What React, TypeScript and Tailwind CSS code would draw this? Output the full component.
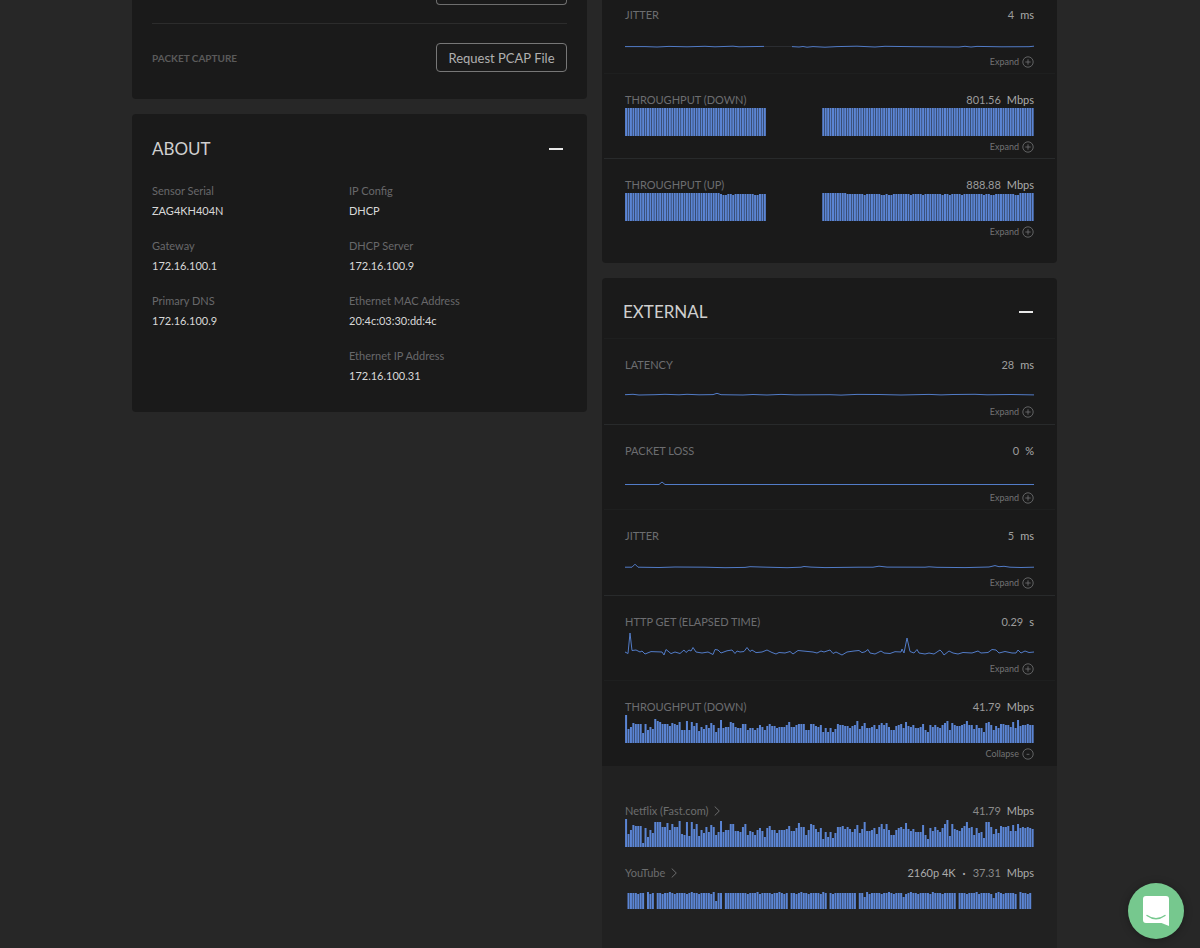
import React from "react";

const DOWN = [28,14,16,20,19,19,19,10,19,13,16,14,24,22,21,19,19,19,17,20,19,18,21,13,13,22,13,21,17,20,12,16,14,18,15,20,18,11,15,23,15,16,16,21,20,16,15,15,19,19,13,15,15,13,15,18,16,13,17,19,17,17,15,16,16,16,18,21,16,16,18,19,19,19,13,13,19,19,17,16,18,11,15,11,15,11,14,19,18,18,17,17,15,17,18,22,14,17,20,15,15,16,18,14,18,20,18,20,16,13,13,17,18,19,15,21,17,16,18,15,15,16,19,13,11,18,16,18,16,15,18,20,22,13,20,18,17,17,18,19,22,18,18,14,18,15,15,11,20,21,18,13,17,15,19,19,18,18,16,21,15,23,17,18,18,19,18,18];

const NETFLIX = [28,13,17,22,21,21,21,4,19,10,17,14,25,25,25,20,20,24,17,23,20,20,26,13,12,25,11,25,18,23,11,17,14,20,15,22,20,12,15,26,15,17,17,23,23,16,16,15,20,23,12,16,15,12,17,19,16,10,19,21,17,17,14,17,17,17,18,21,16,16,19,24,20,20,12,17,23,22,18,15,19,8,15,10,15,9,14,20,20,21,18,20,18,15,18,22,14,18,25,16,16,17,19,13,20,23,18,23,17,12,12,17,19,20,18,24,18,16,18,15,15,15,22,12,8,19,16,20,17,15,19,23,27,11,23,18,17,16,19,21,25,19,20,12,19,14,15,9,25,25,20,13,18,14,21,20,20,21,16,22,16,23,19,20,19,20,19,18];

const YT_GAPS = [0, 8, 12, 40, 67, 83, 95, 136, 161, 167];
const YT_DIPS: Record<number, number> = { 37: 8, 98: 12, 114: 12, 151: 11 };
const YOUTUBE = Array.from({ length: 168 }, (_, i) =>
  YT_GAPS.includes(i) ? 0 : (YT_DIPS[i] ?? 16 + ((i * 7) % 5 === 0 ? -1 : 0) + ((i * 5) % 9 === 0 ? 1 : 0)),
);

const offline = (i: number) => i > 57 && i < 81;
const LAN_DOWN = Array.from({ length: 168 }, (_, i) => (offline(i) ? 0 : 28));
const LAN_DIPS = [40, 41, 44, 53, 54, 98, 105, 106, 108, 109, 117, 122, 130, 133, 138, 147, 150, 151, 160, 161];
const LAN_UP = Array.from({ length: 168 }, (_, i) => (offline(i) ? 0 : LAN_DIPS.includes(i) ? 26 : i > 38 && i < 58 ? 27 : i > 90 && i < 162 ? 27 : 28));

const LAN_JITTER = ["0,23.6 20,23.6 32,24 44,23.4 62,23.8 80,23.3 90,23.8 108,23.2 114,23.8 139,23.4", "167,23.6 174,24 178,23.5 182,24.2 188,23.6 200,24.2 212,23.6 232,23.2 250,24 260,23.3 290,23.7 318,23.9 334,24 340,23.3 346,24 352,23.4 376,23.8 404,23.7 409,23.2"];
const LATENCY = ["0,21.7 8,21.3 14,22 30,21.7 40,21.3 54,21.8 62,21.3 74,21.8 88,21.6 92,20.3 96,21.7 118,22 128,21.5 142,22 156,21.4 170,21.9 205,21.7 216,22.1 232,21.4 254,21.5 276,22 304,21.4 316,21.9 328,21.5 350,21.3 362,21.8 386,21.5 409,21.9"];
const LOSS = ["0,25.5 34,25.5 37,23 40,25.5 409,25.5"];
const JITTER = ["0,23.2 7,23.2 10,20.2 13,23.2 34,23.5 50,23 80,23.2 100,23.7 120,23.4 125,22.7 142,23.2 162,23.7 176,23.2 179,22.5 186,23.1 200,23.6 234,23.2 248,23.2 254,22.2 262,23.1 300,23.2 304,22.8 312,23.3 340,23.6 364,23 370,21.6 374,22.7 379,22.3 385,23.2 396,23.5 409,23.2"];
const HTTP = ["0,22 3,23.5 5,3 7,20.5 11,20 15,22 17,21 20,24 26,21.6 37,22 39,25 41,19.5 46,23.6 50,22 55,23.5 59,20 61,22.5 64,20 66,21 68,17.5 71,22 77,23 83,22 88,24.5 90,19.5 93,20 96,23 102,20.8 107,20 110,23.5 112,21 115,22 119,21.5 122,17.5 125,21.5 127,20 131,22.6 137,22 142,20 147,22.5 151,24 154,22.5 160,23 165,21.5 168,24 173,20.5 188,22 192,23 196,21 199,22 202,21 205,20 208,23.5 211,22 217,25 222,22 229,21 234,20.5 237,22.6 240,21.8 243,19.5 245,23 250,24 256,21 259,23 265,23.5 270,21.7 276,22 277,19 279,23 282,8 285,21.5 289,23 292,19.5 294,23 300,24 304,23 309,24 315,20 317,22 319,25 324,21 328,23 333,24 338,22.5 347,23 353,21 356,23 363,22.5 367,19.5 371,20 374,23 380,21.5 387,23 391,23 393,20 396,23 400,21 404,22.5 409,22"];

function Bars({ data, label }: { data: number[]; label: string }) {
  return (
    <svg role="img" aria-label={label} viewBox="0 0 168 28" preserveAspectRatio="none" className="block h-7 w-full fill-[#5b85d4]">
      {data.map((h, i) => (h ? <rect key={i} x={i + 0.03} y={28 - h} width={0.82} height={h} /> : null))}
    </svg>
  );
}

function Line({ lines, label }: { lines: string[]; label: string }) {
  return (
    <svg role="img" aria-label={label} viewBox="0 0 409 28" preserveAspectRatio="none" className="block h-7 w-full fill-none stroke-[#527cc8] stroke-1">
      {lines.length > 1 && <path d="M139 23.5H167" className="stroke-[#2b2d31]" />}
      {lines.map((points) => (
        <polyline key={points} points={points} strokeLinejoin="round" vectorEffect="non-scaling-stroke" />
      ))}
    </svg>
  );
}

function Toggle({ open = false }: { open?: boolean }) {
  return (
    <button type="button" aria-expanded={open} className="flex h-[22px] items-center gap-[3px] self-end text-[9px] leading-3 text-[#727374]">
      {open ? "Collapse" : "Expand"}
      <svg viewBox="0 0 12 12" className="size-3 fill-none stroke-[#747576]" strokeWidth="0.8" aria-hidden="true">
        <circle cx="6" cy="6" r="5.2" />
        {open ? <path d="M4.6 6.3H7.4" /> : <path d="M3.3 6H8.7M6 3.3V8.7" />}
      </svg>
    </button>
  );
}

function Reading({ label, value, unit, note, link }: { label: string; value: string; unit: string; note?: string; link?: boolean }) {
  return (
    <div className="flex h-4 items-center justify-between text-[11px] leading-4">
      {link ? (
        <a href="#" className="flex items-center gap-[6px] text-[#6c6d6e]">
          {label}
          <svg viewBox="0 0 6 10" className="h-[10px] w-[6px] fill-none stroke-[#6c6d6e]" aria-hidden="true">
            <path d="M0.7 0.5L5.3 5L0.7 9.5" />
          </svg>
        </a>
      ) : (
        <h3 className="text-[#6c6d70]">{label}</h3>
      )}
      <p className="flex gap-[6px] text-[#ababab]">
        {note && (
          <>
            <span>{note}</span>
            <span className="px-[1px] font-bold">·</span>
          </>
        )}
        <span className={link ? "text-[#8a8a8a]" : "text-[#9c9c9c]"}>{value}</span>
        <span>{unit}</span>
      </p>
    </div>
  );
}

type MetricProps = { label: string; value: string; unit: string; first?: boolean; bright?: boolean; open?: boolean; children: React.ReactNode };

function Metric({ label, value, unit, first, bright, open, children }: MetricProps) {
  const edge = first ? "pt-[7px]" : bright ? "border-t border-[#282a2b] pt-[18px]" : "border-t border-[#1e1f1f] pt-[18px]";
  return (
    <div className={`flex flex-col px-[21px] ${edge}`}>
      <Reading label={label} value={value} unit={unit} />
      {children}
      <Toggle open={open} />
    </div>
  );
}

function MinimizeButton({ label }: { label: string }) {
  return (
    <button type="button" aria-label={label} className="flex h-6 w-[14px] items-center">
      <span className="h-[2px] w-full bg-[#e8e8e8]" />
    </button>
  );
}

const ABOUT = [
  [["Sensor Serial", "ZAG4KH404N"], ["Gateway", "172.16.100.1"], ["Primary DNS", "172.16.100.9"]],
  [["IP Config", "DHCP"], ["DHCP Server", "172.16.100.9"], ["Ethernet MAC Address", "20:4c:03:30:dd:4c"], ["Ethernet IP Address", "172.16.100.31"]],
];

export default function App() {
  return (
    <div className="min-h-screen bg-[#272727] pr-[143px] pl-[132px] font-[Lato,sans-serif]">
      <main className="grid grid-cols-2 items-start gap-[15px]">
        <div className="flex flex-col gap-[15px]">
          <section className="rounded-b bg-[#1a1a1a] px-5 pb-[27px]">
            <div className="flex justify-end border-b border-[#2c2c2c] pb-[18px]">
              <div className="h-[5px] w-[131px] rounded-b border border-t-0 border-[#6e6e6e]" />
            </div>
            <div className="flex items-center justify-between pt-[19px]">
              <h3 className="text-[10px] leading-4 font-bold text-[#5a5a5a]">PACKET CAPTURE</h3>
              <button type="button" className="h-[29px] w-[131px] rounded border border-[#777] text-[13px] leading-5 text-[#b0b0b0]">
                Request PCAP File
              </button>
            </div>
          </section>

          <section className="rounded bg-[#1a1a1a] px-5 pt-[23px] pb-[26px]">
            <header className="flex items-center justify-between pr-1">
              <h2 className="text-[17px] leading-6 text-[#cfcfcf]">ABOUT</h2>
              <MinimizeButton label="Minimize about" />
            </header>
            <div className="mt-5 grid grid-cols-[197px_1fr]">
              {ABOUT.map((column) => (
                <dl key={column[0][0]} className="flex flex-col gap-[15px]">
                  {column.map(([term, detail]) => (
                    <div key={term} className="text-[11px] leading-5">
                      <dt className="text-[#68686a]">{term}</dt>
                      <dd className="text-[#d8d8d8]">{detail}</dd>
                    </div>
                  ))}
                </dl>
              ))}
            </div>
          </section>
        </div>

        <div className="flex flex-col gap-[15px]">
          <section className="rounded-b bg-[#1a1a1a] px-[2px] pb-5">
            <Metric label="JITTER" value="4" unit="ms" first>
              <Line lines={LAN_JITTER} label="Internal jitter" />
            </Metric>
            <Metric label="THROUGHPUT (DOWN)" value="801.56" unit="Mbps">
              <Bars data={LAN_DOWN} label="Internal download throughput" />
            </Metric>
            <Metric label="THROUGHPUT (UP)" value="888.88" unit="Mbps" bright>
              <Bars data={LAN_UP} label="Internal upload throughput" />
            </Metric>
          </section>

          <section className="rounded-t bg-[#1a1a1a]">
            <header className="flex items-center justify-between pt-[22px] pr-6 pb-[14px] pl-[21px]">
              <h2 className="text-[17px] leading-6 text-[#cfcfcf]">EXTERNAL</h2>
              <MinimizeButton label="Minimize external" />
            </header>
            <div className="grid min-h-[428px] auto-rows-fr px-[2px]">
              <Metric label="LATENCY" value="28" unit="ms">
                <Line lines={LATENCY} label="Latency" />
              </Metric>
              <Metric label="PACKET LOSS" value="0" unit="%" bright>
                <Line lines={LOSS} label="Packet loss" />
              </Metric>
              <Metric label="JITTER" value="5" unit="ms">
                <Line lines={JITTER} label="Jitter" />
              </Metric>
              <Metric label="HTTP GET (ELAPSED TIME)" value="0.29" unit="s" bright>
                <Line lines={HTTP} label="HTTP GET elapsed time" />
              </Metric>
              <Metric label="THROUGHPUT (DOWN)" value="41.79" unit="Mbps" open>
                <Bars data={DOWN} label="Download throughput" />
              </Metric>
            </div>
            <div className="flex flex-col gap-[18px] bg-[#212121] px-[23px] pt-[37px] pb-[39px]">
              <div>
                <Reading label="Netflix (Fast.com)" value="41.79" unit="Mbps" link />
                <Bars data={NETFLIX} label="Netflix throughput" />
              </div>
              <div>
                <Reading label="YouTube" value="37.31" unit="Mbps" note="2160p 4K" link />
                <Bars data={YOUTUBE} label="YouTube throughput" />
              </div>
            </div>
          </section>
        </div>
      </main>

      <button
        type="button"
        aria-label="Open chat"
        className="fixed right-4 bottom-[9px] flex size-14 items-center justify-center rounded-full bg-[#76c88e] shadow-[0_1px_8px_rgba(0,0,0,0.3)]"
      >
        <svg viewBox="0 0 26 30" className="h-[30px] w-[26px]" aria-hidden="true">
          <path d="M3 0H23Q26 0 26 3V30L18.5 27H3Q0 27 0 24V3Q0 0 3 0Z" fill="#fff" />
          <path d="M4 19.5Q13 26 22 19.5" fill="none" stroke="#76c88e" strokeWidth="1.4" strokeLinecap="round" />
        </svg>
      </button>
    </div>
  );
}
